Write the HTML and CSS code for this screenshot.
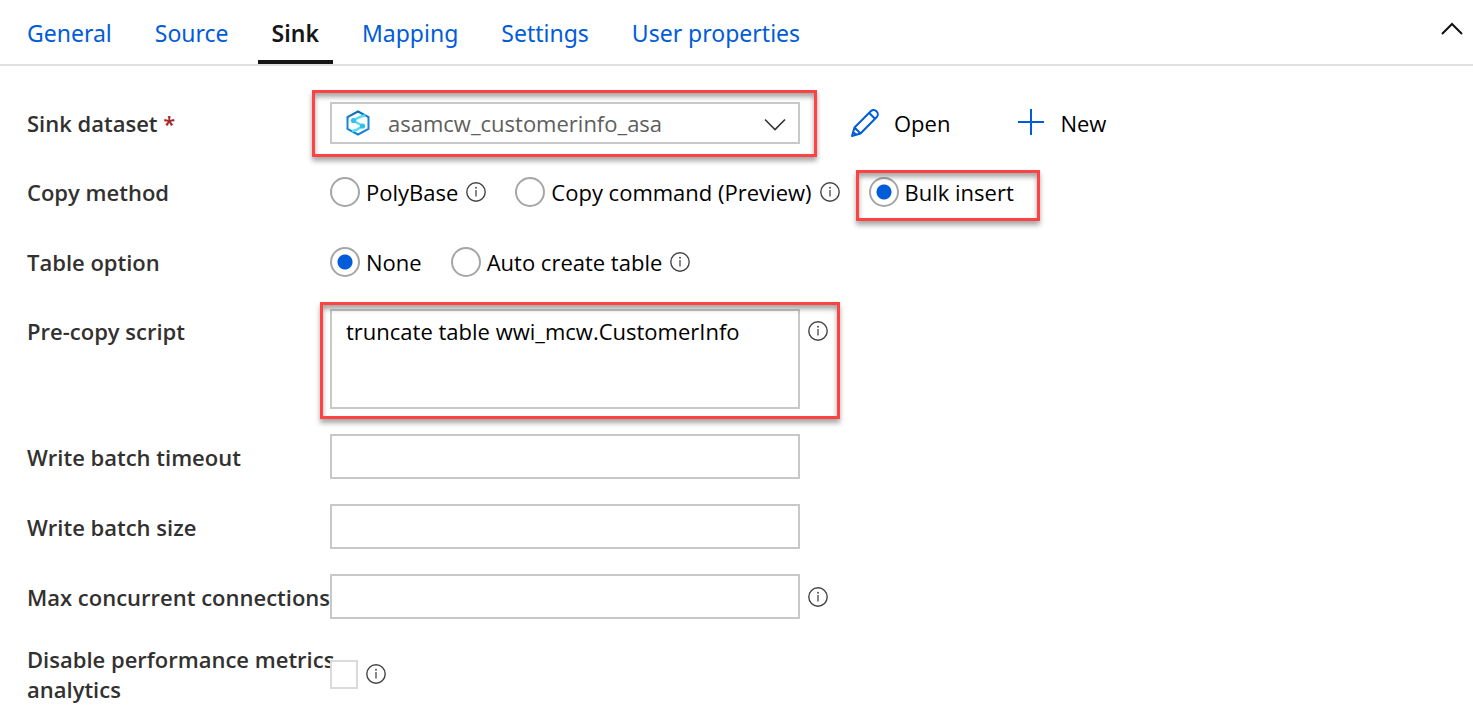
FILE: index.html
```html
<!DOCTYPE html>
<html lang="en">
<head>
<meta charset="utf-8">
<title>Copy activity - Sink</title>
<link rel="stylesheet" href="styles.css">
</head>
<body>
<svg width="0" height="0" class="defs" aria-hidden="true">
  <symbol id="info" viewBox="0 0 20 20">
    <circle cx="10" cy="10" r="9.2" fill="none" stroke="#444" stroke-width="1.4"/>
    <path d="M10 8v6.5" stroke="#555" stroke-width="1.4" fill="none"/>
    <circle cx="10" cy="5.8" r="1" fill="#555"/>
  </symbol>
</svg>
<header class="tabbar">
  <nav class="tabs">
    <a class="tab" href="#general">General</a>
    <a class="tab" href="#source">Source</a>
    <a class="tab tab-active" href="#sink" aria-current="page">Sink</a>
    <a class="tab" href="#mapping">Mapping</a>
    <a class="tab" href="#settings">Settings</a>
    <a class="tab" href="#user">User properties</a>
  </nav>
  <button class="collapse" type="button" aria-label="Collapse">
    <svg width="22" height="14" viewBox="0 0 22 14"><path d="M1 12L11 2l10 10" fill="none" stroke="#111" stroke-width="2"/></svg>
  </button>
</header>
<form class="form">
  <div class="row row-dataset">
    <label class="label" for="dataset">Sink dataset <span class="required">*</span></label>
    <div class="controls">
      <div class="select-wrap marked mark-dataset">
        <select class="field select" id="dataset"><option>asamcw_customerinfo_asa</option></select>
        <svg class="select-icon" width="24" height="26" viewBox="0 0 24 26">
          <defs>
            <linearGradient id="hex" x1="0" y1="0" x2="0" y2="1"><stop offset="0" stop-color="#0a6cc0"/><stop offset=".5" stop-color="#1688dd"/><stop offset="1" stop-color="#1a80d8"/></linearGradient>
          </defs>
          <path d="M12 1.500L22.500 7.200v11.600L12 24.500 1.500 18.800V7.200z" fill="none" stroke="url(#hex)" stroke-width="2"/>
          <path d="M19.500 5.500L15 6.500 7 10.500l10 5.500-8 4.500-3 .5" fill="none" stroke="#50dcf5" stroke-width="2.400"/>
          <circle cx="7.500" cy="10.500" r="2.600" fill="#32bfea"/>
          <circle cx="16.500" cy="16" r="2.600" fill="#32bfea"/>
        </svg>
        <svg class="select-arrow" width="22" height="14" viewBox="0 0 22 14"><path d="M1 1.500l10 10 10-10" fill="none" stroke="#333" stroke-width="1.600"/></svg>
      </div>
      <div class="actions">
        <button class="action" type="button">
          <svg width="28" height="28" viewBox="0 0 28 28" fill="none" stroke="#015cda" stroke-width="2" stroke-linejoin="round"><path d="M1 27l2.500-8.500L20 2c1.500-1.300 4-1.200 5.500.2 1.700 1.600 1.700 4.200.3 5.800L9.500 24.500zM3.500 18.500l6 6M18.200 4l5.800 5.800M1.500 22.500l4 3.500"/></svg>
          Open
        </button>
        <button class="action" type="button">
          <svg width="28" height="28" viewBox="0 0 28 28" fill="none" stroke="#015cda" stroke-width="2"><path d="M14 0v26M1 13h26"/></svg>
          New
        </button>
      </div>
    </div>
  </div>
  <div class="row row-choice" role="radiogroup" aria-labelledby="method-label">
    <span class="label" id="method-label">Copy method</span>
    <div class="choices">
      <div class="choice"><label class="option"><input class="radio" type="radio" name="method">PolyBase</label><svg class="info"><use href="#info"/></svg></div>
      <div class="choice"><label class="option"><input class="radio" type="radio" name="method">Copy command (Preview)</label><svg class="info"><use href="#info"/></svg></div>
      <div class="choice marked mark-bulk"><label class="option"><input class="radio" type="radio" name="method" checked>Bulk insert</label></div>
    </div>
  </div>
  <div class="row row-choice" role="radiogroup" aria-labelledby="table-label">
    <span class="label" id="table-label">Table option</span>
    <div class="choices">
      <div class="choice"><label class="option"><input class="radio" type="radio" name="table" checked>None</label></div>
      <div class="choice"><label class="option"><input class="radio" type="radio" name="table">Auto create table</label><svg class="info"><use href="#info"/></svg></div>
    </div>
  </div>
  <div class="row row-script">
    <label class="label" for="script">Pre-copy script</label>
    <div class="controls marked mark-script">
      <textarea class="field textarea" id="script" spellcheck="false">truncate table wwi_mcw.CustomerInfo</textarea>
      <svg class="info"><use href="#info"/></svg>
    </div>
  </div>
  <div class="row">
    <label class="label" for="timeout">Write batch timeout</label>
    <div class="controls"><input class="field text" id="timeout" type="text"></div>
  </div>
  <div class="row">
    <label class="label" for="size">Write batch size</label>
    <div class="controls"><input class="field text" id="size" type="text"></div>
  </div>
  <div class="row">
    <label class="label" for="connections">Max concurrent connections</label>
    <div class="controls"><input class="field text" id="connections" type="text"><svg class="info"><use href="#info"/></svg></div>
  </div>
  <div class="row">
    <label class="label" for="disable">Disable performance metrics analytics</label>
    <div class="controls"><input class="checkbox" id="disable" type="checkbox"><svg class="info"><use href="#info"/></svg></div>
  </div>
</form>
</body>
</html>
```
FILE: styles.css
```css
* {
  box-sizing: border-box;
}

body {
  margin: 0;
  background: #fff;
  color: #000;
  font: 22px/30px "Open Sans", "Noto Sans", sans-serif;
}

button, input, select, textarea {
  margin: 0;
  color: inherit;
  font: inherit;
}

.defs {
  display: block;
}

.tabbar {
  display: flex;
  align-items: flex-start;
  justify-content: space-between;
  height: 66px;
  padding: 0 10px 0 13px;
  border-bottom: 2px solid #dfdfdf;
}

.tabs {
  display: flex;
  gap: 15px;
}

.tab {
  height: 64px;
  padding: 17px 14px 0;
  color: #015cda;
  font-family: "Noto Sans", "Open Sans", sans-serif;
  font-size: 23px;
  line-height: 32px;
  text-decoration: none;
  white-space: nowrap;
}

.tab-active {
  border-bottom: 4px solid #161616;
  color: #161616;
  font-weight: 600;
}

.collapse {
  display: flex;
  padding: 22px 0 0;
  border: 0;
  background: none;
}

.form {
  display: flex;
  flex-direction: column;
  gap: 25px;
  padding: 36px 27px 17px;
}

.row {
  display: grid;
  grid-template-columns: 303px 1fr;
  align-items: center;
}

.row-choice {
  min-height: 45px;
}

.row-script {
  align-items: start;
}

.row-script .label {
  padding-top: 7px;
}

.label {
  margin-right: -10px;
  color: #323130;
  font-weight: 600;
}

.required {
  color: #a4262c;
}

.controls {
  display: flex;
  align-items: center;
  justify-self: start;
  gap: 8px;
}

.field {
  width: 470px;
  border: 2px solid #c8c8c8;
  border-radius: 0;
  background: #fff;
  outline: none;
}

.text {
  height: 45px;
  padding: 0 14px;
}

.textarea {
  display: block;
  height: 100px;
  padding: 5px 14px;
  resize: none;
}

.row-script .controls {
  align-items: flex-start;
}

.row-script .info {
  margin-top: 12px;
}

.select-wrap {
  position: relative;
}

.select {
  display: block;
  height: 42px;
  padding: 0 50px 0 56px;
  appearance: none;
  color: #605e5c;
}

.select-icon {
  position: absolute;
  top: 8px;
  left: 16px;
  pointer-events: none;
}

.select-arrow {
  position: absolute;
  top: 16px;
  right: 14px;
  pointer-events: none;
}

.actions {
  display: flex;
  gap: 67px;
  padding-left: 43px;
}

.action {
  display: flex;
  align-items: center;
  gap: 15px;
  padding: 0;
  border: 0;
  background: none;
}

.choices {
  display: flex;
  gap: 29px;
}

.choice, .option {
  display: flex;
  align-items: center;
  white-space: nowrap;
}

.choice {
  gap: 8px;
}

.option {
  gap: 6px;
}

.radio {
  width: 30px;
  height: 30px;
  appearance: none;
  border: 2px solid #a6a6a6;
  border-radius: 50%;
  background: #fff;
}

.radio:checked {
  background: radial-gradient(circle, #015cda 7px, #fff 8px);
}

.checkbox {
  width: 28px;
  height: 29px;
  appearance: none;
  border: 2px solid #dadada;
  background: #fff;
}

.info {
  flex: none;
  width: 20px;
  height: 20px;
}

.marked {
  position: relative;
}

.marked::after {
  content: "";
  position: absolute;
  border: 3px solid #ff4343;
  box-shadow: 0 4px 5px rgba(0, 0, 0, 0.35), inset 0 4px 5px rgba(0, 0, 0, 0.35);
  pointer-events: none;
}

.mark-dataset::after {
  inset: -12px -17px -13px -18px;
}

.mark-bulk::after {
  inset: -7px -26px -14px -13px;
}

.mark-script::after {
  inset: -7px -12px -10px -10px;
}
```
